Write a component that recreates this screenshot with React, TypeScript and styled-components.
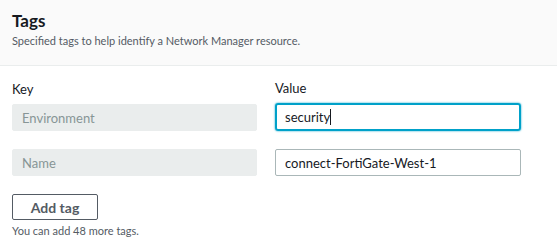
import React from "react";
import styled, { createGlobalStyle } from "styled-components";

const GlobalStyle = createGlobalStyle`
  body {
    margin: 0;
    background: #ffffff;
    font-family: Lato, "Open Sans", "Liberation Sans", sans-serif;
    color: #16191f;
  }
`;

const Panel = styled.section`
  width: 557px;
`;

const Header = styled.header`
  background: #fafafa;
  border-bottom: 1px solid #eaeded;
  padding: 10px 12px 0;
  box-sizing: border-box;
  height: 66px;
`;

const Title = styled.h2`
  margin: 0;
  font-size: 17px;
  font-weight: 700;
  line-height: 22px;
  color: #16191f;
`;

const Subtitle = styled.p`
  margin: 1px 0 0;
  font-size: 11px;
  line-height: 16px;
  color: #545b64;
`;

const Body = styled.div`
  padding: 13px 12px 0;
`;

const Grid = styled.div`
  display: grid;
  grid-template-columns: 245px 246px;
  column-gap: 18px;
  row-gap: 18px;
  align-items: end;
`;

const Label = styled.div`
  font-size: 13px;
  line-height: 18px;
  color: #16191f;
  margin-bottom: 6px;
`;

const Field = styled.div`
  display: flex;
  flex-direction: column;
`;

const Input = styled.input`
  box-sizing: border-box;
  height: 27px;
  width: 100%;
  font-family: inherit;
  font-size: 13px;
  padding: 0 9px;
  border-radius: 2px;
  color: #16191f;
  outline: none;
  border: 1px solid #aab7b8;

  &:disabled {
    background: #eaeded;
    border: 1px solid #eaeded;
    color: #879596;
  }
`;

const Caret = styled.span`
  display: inline-block;
  width: 1px;
  height: 16px;
  background: #16191f;
  vertical-align: middle;
`;

const FocusedInput = styled.div`
  box-sizing: border-box;
  height: 28px;
  border: 2px solid #00a1c9;
  border-radius: 3px;
  box-shadow: 0 0 2px #00a1c9;
  font-size: 13px;
  padding: 0 8px;
  display: flex;
  align-items: center;
  color: #16191f;
`;

const AddButton = styled.button`
  margin-top: 18px;
  box-sizing: border-box;
  width: 86px;
  height: 26px;
  background: #ffffff;
  border: 1px solid #545b64;
  border-radius: 2px;
  font-family: inherit;
  font-weight: 700;
  font-size: 14px;
  color: #545b64;
  padding: 0;
  display: block;
`;

const Hint = styled.div`
  margin-top: 4px;
  font-size: 11px;
  line-height: 14px;
  color: #545b64;
`;

export default function App() {
  return (
    <Panel>
      <GlobalStyle />
      <Header>
        <Title>Tags</Title>
        <Subtitle>Specified tags to help identify a Network Manager resource.</Subtitle>
      </Header>
      <Body>
        <Grid>
          <Field>
            <Label>Key</Label>
            <Input disabled value="Environment" readOnly />
          </Field>
          <Field>
            <Label>Value</Label>
            <FocusedInput>
              security
              <Caret />
            </FocusedInput>
          </Field>
          <Field>
            <Input disabled value="Name" readOnly />
          </Field>
          <Field>
            <Input value="connect-FortiGate-West-1" readOnly />
          </Field>
        </Grid>
        <AddButton>Add tag</AddButton>
        <Hint>You can add 48 more tags.</Hint>
      </Body>
    </Panel>
  );
}
